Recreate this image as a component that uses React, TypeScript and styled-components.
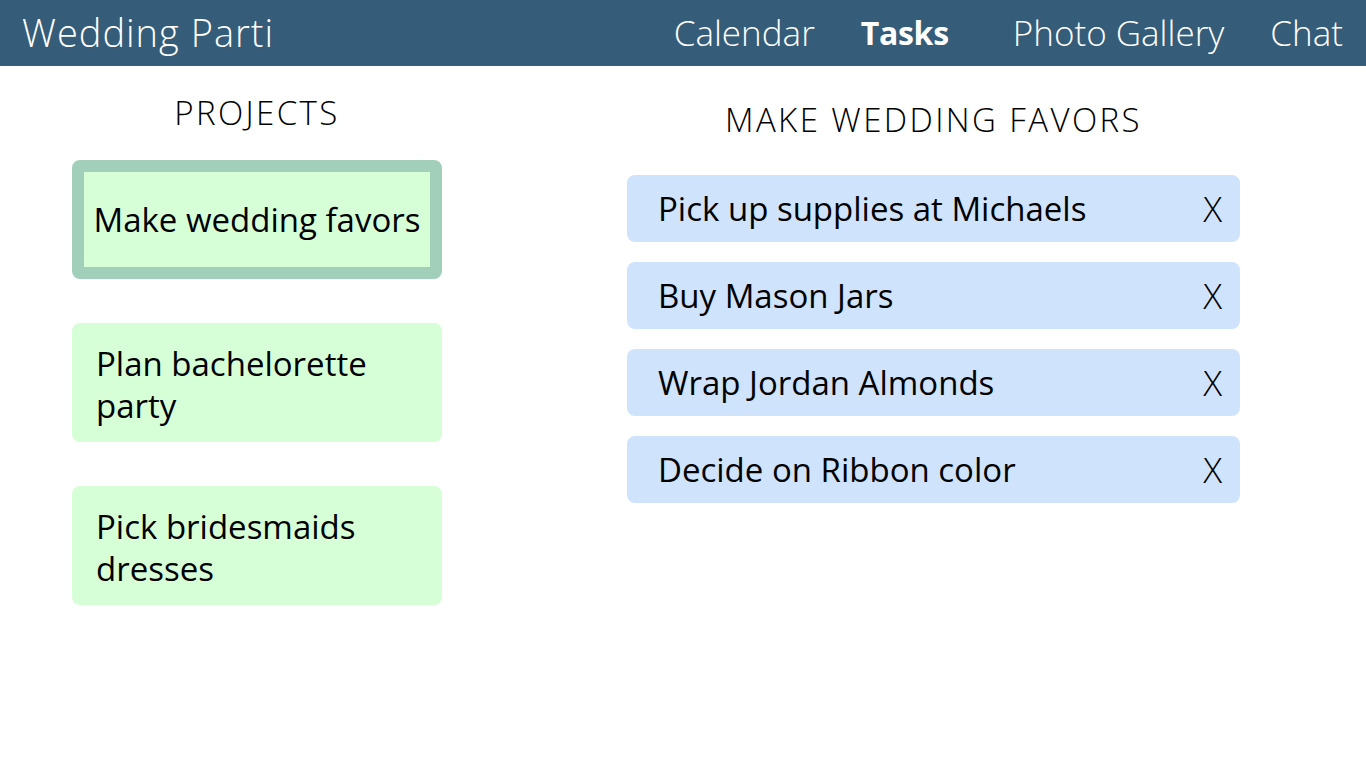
import React from "react";
import styled, { createGlobalStyle } from "styled-components";

const Global = createGlobalStyle`
  html, body { margin: 0; padding: 0; background: #ffffff; }
  body { font-family: "Open Sans", "Noto Sans", sans-serif; color: #000; }
`;

const Header = styled.header`
  height: 66px;
  background: #355c78;
  display: flex;
  align-items: center;
  justify-content: space-between;
  padding: 0 23px 0 22px;
  color: #ffffff;
`;

const Brand = styled.div`
  font-size: 38px;
  font-weight: 300;
  letter-spacing: 1px;
  margin-top: -2px;
`;

const Nav = styled.nav`
  display: flex;
  align-items: center;
  gap: 46px;
`;

const NavItem = styled.span<{ $active?: boolean }>`
  font-size: ${(p) => (p.$active ? "32px" : "35px")};
  font-weight: ${(p) => (p.$active ? 700 : 300)};
  margin-right: ${(p) => (p.$active ? "18px" : "0")};
  letter-spacing: ${(p) => (p.$active ? "-0.3px" : "0")};
  margin-top: -2px;
`;

const Main = styled.main`
  display: grid;
  grid-template-columns: 627px 613px;
`;

const ProjectsCol = styled.section`
  display: flex;
  flex-direction: column;
  padding-left: 72px;
  width: 370px;
`;

const Heading = styled.h2<{ $top: number }>`
  margin: ${(p) => p.$top}px 0 0 0;
  font-size: 33px;
  font-weight: 300;
  letter-spacing: 2.4px;
  text-align: center;
  line-height: 40px;
`;

const ProjectList = styled.div`
  display: flex;
  flex-direction: column;
  gap: 44px;
  margin-top: 27px;
`;

const ProjectCard = styled.div<{ $selected?: boolean }>`
  box-sizing: border-box;
  height: 119px;
  background: #d7ffd7;
  border-radius: 8px;
  border: ${(p) => (p.$selected ? "12px solid #a1cfb9" : "none")};
  display: flex;
  align-items: center;
  justify-content: ${(p) => (p.$selected ? "center" : "flex-start")};
  padding: ${(p) => (p.$selected ? "0" : "4px 40px 0 24px")};
  font-size: 33px;
  font-weight: 400;
  line-height: 42px;
  white-space: ${(p) => (p.$selected ? "nowrap" : "normal")};
`;

const TasksCol = styled.section`
  display: flex;
  flex-direction: column;
`;

const TaskList = styled.div`
  display: flex;
  flex-direction: column;
  gap: 20px;
  margin-top: 35px;
`;

const TaskRow = styled.div`
  height: 67px;
  background: #d0e3fd;
  border-radius: 8px;
  display: flex;
  align-items: center;
  justify-content: space-between;
  padding: 0 18px 0 31px;
  font-size: 33px;
  font-weight: 400;
`;

const Remove = styled.span`
  font-weight: 300;
  font-size: 35px;
`;

const projects = ["Make wedding favors", "Plan bachelorette party", "Pick bridesmaids dresses"];
const tasks = ["Pick up supplies at Michaels", "Buy Mason Jars", "Wrap Jordan Almonds", "Decide on Ribbon color"];

export default function App() {
  return (
    <>
      <Global />
      <Header>
        <Brand>Wedding Parti</Brand>
        <Nav>
          <NavItem>Calendar</NavItem>
          <NavItem $active>Tasks</NavItem>
          <NavItem>Photo Gallery</NavItem>
          <NavItem>Chat</NavItem>
        </Nav>
      </Header>
      <Main>
        <ProjectsCol>
          <Heading $top={27}>PROJECTS</Heading>
          <ProjectList>
            {projects.map((p, i) => (
              <ProjectCard key={p} $selected={i === 0}>
                {p}
              </ProjectCard>
            ))}
          </ProjectList>
        </ProjectsCol>
        <TasksCol>
          <Heading $top={34}>MAKE WEDDING FAVORS</Heading>
          <TaskList>
            {tasks.map((t) => (
              <TaskRow key={t}>
                <span>{t}</span>
                <Remove>X</Remove>
              </TaskRow>
            ))}
          </TaskList>
        </TasksCol>
      </Main>
    </>
  );
}
